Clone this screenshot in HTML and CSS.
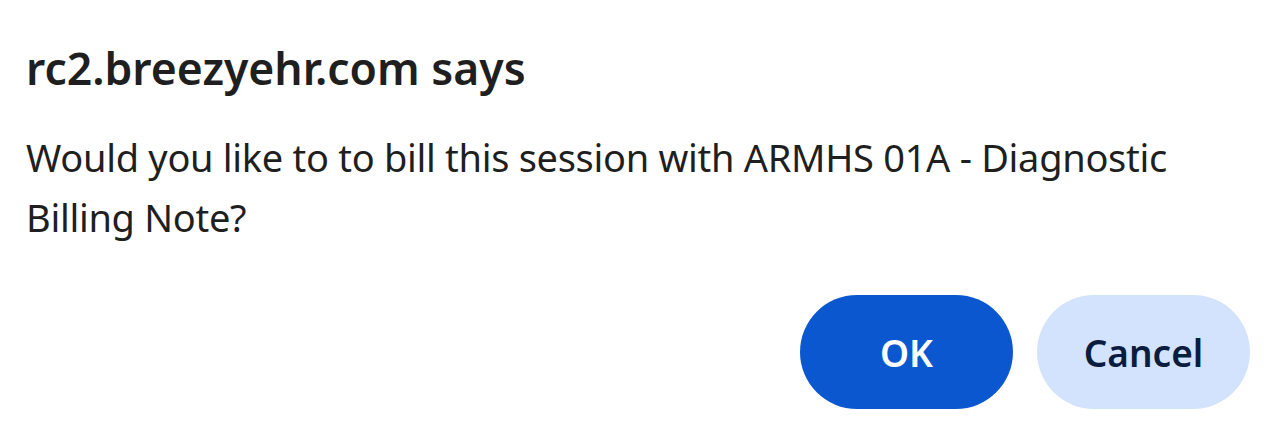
FILE: index.html
```html
<!DOCTYPE html>
<html>
<head>
<meta charset="utf-8">
<link rel="stylesheet" href="styles.css">
</head>
<body>
<div class="dialog">
  <h1 class="title">rc2.breezyehr.com says</h1>
  <p class="message">Would you like to to bill this session with ARMHS 01A - Diagnostic Billing Note?</p>
  <div class="actions">
    <button class="btn btn-primary">OK</button>
    <button class="btn btn-secondary">Cancel</button>
  </div>
</div>
</body>
</html>
```
FILE: styles.css
```css
html, body {
  margin: 0;
  padding: 0;
  background: #ffffff;
}
.dialog {
  width: 1276px;
  height: 447px;
  box-sizing: border-box;
  padding: 41px 26px 0 26px;
  font-family: "Noto Sans", "Open Sans", sans-serif;
  color: #1f1f1f;
  display: flex;
  flex-direction: column;
}
.title {
  margin: 0;
  font-size: 44.5px;
  line-height: 54px;
  font-weight: 600;
  letter-spacing: 0;
}
.message {
  margin: 32px 0 0 0;
  font-size: 38px;
  line-height: 60px;
  font-weight: 400;
  letter-spacing: -0.3px;
}
.actions {
  display: flex;
  justify-content: flex-end;
  gap: 24px;
  margin-top: 48px;
}
.btn {
  width: 213px;
  height: 114px;
  border: none;
  border-radius: 57px;
  font-family: "Noto Sans", "Open Sans", sans-serif;
  font-size: 37px;
  font-weight: 600;
  padding: 0;
}
.btn-primary {
  background: #0b57d0;
  color: #ffffff;
}
.btn-secondary {
  background: #d3e3fd;
  color: #0a1d3f;
}
```
